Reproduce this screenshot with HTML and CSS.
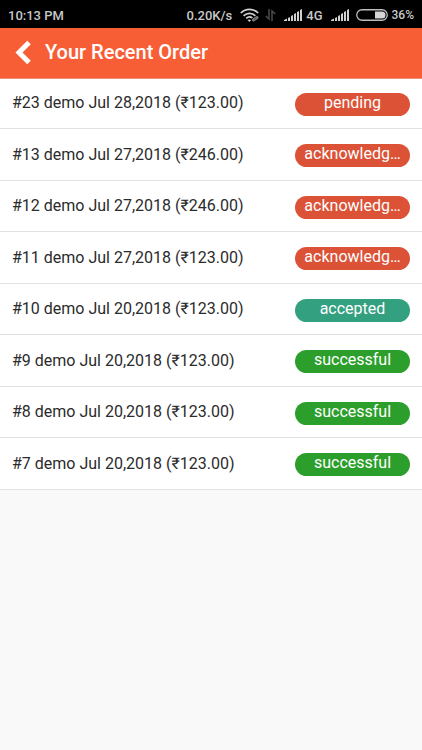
FILE: index.html
```html
<!DOCTYPE html>
<html lang="en">
<head>
<meta charset="utf-8">
<meta name="viewport" content="width=device-width, initial-scale=1">
<title>Your Recent Order</title>
<link rel="stylesheet" href="styles.css">
</head>
<body>
<div class="statusbar">
  <span class="clock">10:13 PM</span>
  <span class="speed">0.20K/s</span>
  <svg class="wifi" width="20" height="14" viewBox="0 0 20 14" fill="none" stroke="#d0d0d0" stroke-width="1.700" aria-hidden="true">
    <path d="M.8 5A12.300 12.300 0 0 1 18.200 5M3.600 7.800A8.400 8.400 0 0 1 15.400 7.800M6.200 10.400A4.700 4.700 0 0 1 12.400 10"/>
    <path d="M7.500 12L9.500 14L11 12.300Q9.500 10.800 7.500 12Z" fill="#d0d0d0" stroke="none"/>
    <path d="M13.500 12L17 9.500" stroke="#000" stroke-width="4.500" stroke-linecap="round"/>
    <path d="M13.500 12L17 9.500" stroke="#808080" stroke-width="3" stroke-linecap="round"/>
    <path d="M14 11.700L16.500 9.900" stroke="#333" stroke-width=".8"/>
  </svg>
  <svg class="traffic" width="11" height="12" viewBox="0 0 11 12" fill="none" stroke="#484848" stroke-width="1.600" aria-hidden="true">
    <path d="M4 0V10L.8 7M7 12V2L10.200 5"/>
  </svg>
  <svg class="signal" width="18" height="12" viewBox="0 0 18 12" fill="#d0d0d0" aria-hidden="true">
    <path d="M0 12V11L3 9.500V12ZM4 12V9L6 8V12ZM7 12V7L9 6V12ZM10 12V5L12 4V12ZM13 12V3L15 2V12ZM16 12V1L18 0V12Z"/>
  </svg>
  <span class="network">4G</span>
  <svg class="signal" width="18" height="12" viewBox="0 0 18 12" fill="#d0d0d0" aria-hidden="true">
    <path d="M0 12V11L3 9.500V12ZM4 12V9L6 8V12ZM7 12V7L9 6V12ZM10 12V5L12 4V12ZM13 12V3L15 2V12ZM16 12V1L18 0V12Z"/>
  </svg>
  <svg class="battery" width="32" height="12" viewBox="0 0 32 12" aria-hidden="true">
    <rect x=".75" y=".75" width="30.500" height="10.500" rx="5.250" fill="none" stroke="#bcbcbc" stroke-width="1.300"/>
    <path d="M19 2.500H26Q29.500 2.500 29.500 6T26 9.500H19Z" fill="#d6d6d6"/>
  </svg>
  <span class="percent">36%</span>
</div>
<header class="appbar">
  <button class="back" type="button" aria-label="Back">
    <svg width="16" height="25" viewBox="0 0 16 25" fill="none" stroke="#fff" stroke-width="5" aria-hidden="true"><path d="M14 2.500L4 12.500L14 22.500"/></svg>
  </button>
  <h1 class="title">Your Recent Order</h1>
</header>
<ul class="orders">
  <li class="order"><span class="label">#23 demo Jul 28,2018 (₹123.00)</span><span class="status open">pending</span></li>
  <li class="order"><span class="label">#13 demo Jul 27,2018 (₹246.00)</span><span class="status open">acknowledg…</span></li>
  <li class="order"><span class="label">#12 demo Jul 27,2018 (₹246.00)</span><span class="status open">acknowledg…</span></li>
  <li class="order"><span class="label">#11 demo Jul 27,2018 (₹123.00)</span><span class="status open">acknowledg…</span></li>
  <li class="order"><span class="label">#10 demo Jul 20,2018 (₹123.00)</span><span class="status accepted">accepted</span></li>
  <li class="order"><span class="label">#9 demo Jul 20,2018 (₹123.00)</span><span class="status successful">successful</span></li>
  <li class="order"><span class="label">#8 demo Jul 20,2018 (₹123.00)</span><span class="status successful">successful</span></li>
  <li class="order"><span class="label">#7 demo Jul 20,2018 (₹123.00)</span><span class="status successful">successful</span></li>
</ul>
</body>
</html>
```
FILE: styles.css
```css
* { box-sizing: border-box; }

body {
  margin: 0;
  background: #f9f9f9;
  color: #2b2b2b;
  font-family: Roboto, "Noto Sans", sans-serif;
  font-size: 16px;
}

.statusbar {
  display: flex;
  align-items: center;
  height: 28px;
  padding: 2px 8px 0;
  background: #000;
  color: #c8c8c8;
  font-size: 13px;
  font-weight: 500;
  white-space: nowrap;
}

.clock { margin-right: auto; }
.wifi { margin-left: 8px; }
.traffic { margin: 0 8px 0 5px; }
.network { margin: 0 8px 0 4px; }
.battery { margin: 0 4px 0 7px; }
.percent { font-size: 12px; }

.appbar {
  display: flex;
  align-items: center;
  height: 50px;
  padding: 0 15px 2px;
  background: #f85e36;
  box-shadow: 0 1px #ef8f78;
  position: relative;
  color: #fff;
}

.back {
  display: flex;
  margin-right: 14px;
  padding: 0;
  border: 0;
  background: none;
}

.title {
  margin: 0;
  font-size: 20px;
  font-weight: 500;
  line-height: 24px;
}

.orders {
  margin: 0;
  padding: 0;
  list-style: none;
}

.order {
  display: flex;
  align-items: center;
  justify-content: space-between;
  min-height: 52px;
  padding: 0 12px;
  border-bottom: 1px solid #e2e2e2;
  background: #fff;
}

.order:nth-child(odd) { min-height: 51px; }

.label { line-height: 24px; }

.status {
  width: 115px;
  height: 23px;
  margin-top: 2px;
  border-radius: 12px;
  color: #fff;
  line-height: 20px;
  text-align: center;
}

.open { background: #db5237; }
.accepted { background: #33a080; }
.successful { background: #2c9e2b; }
```
